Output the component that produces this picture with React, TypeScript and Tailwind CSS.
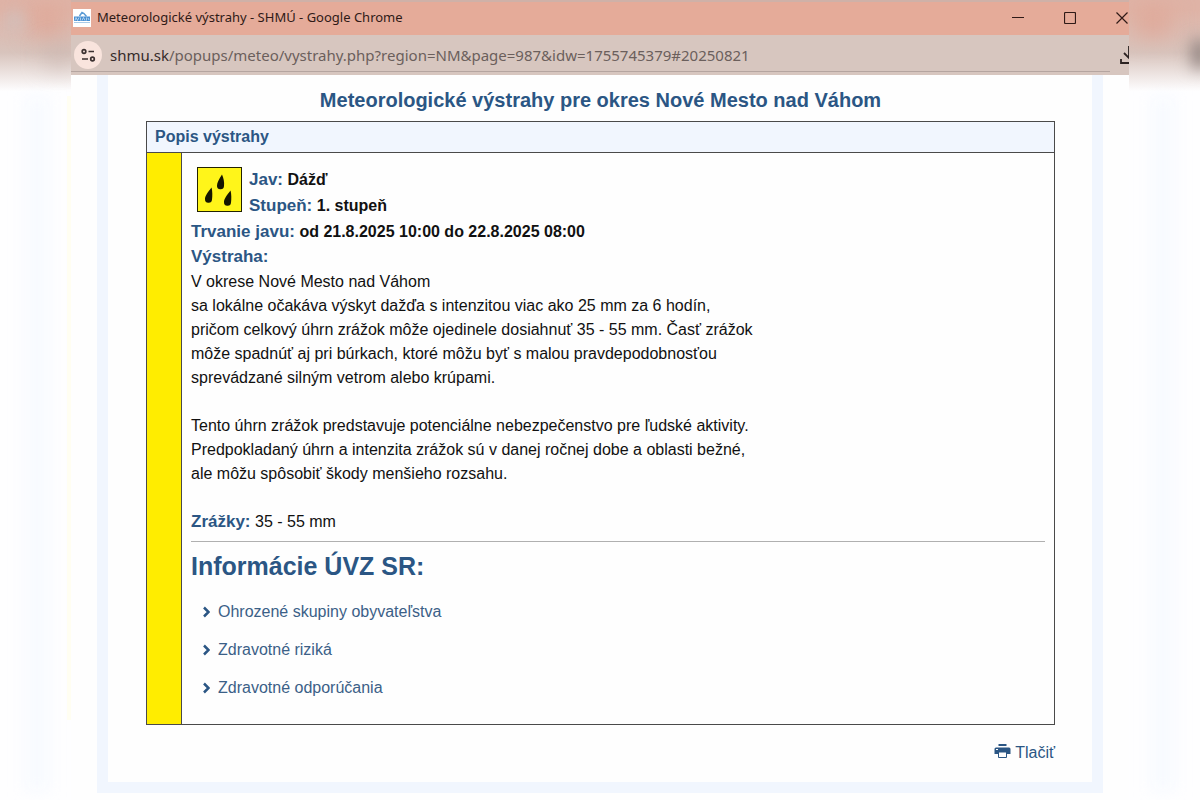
import { ReactNode } from "react";

const links = [
  { label: "Ohrozené skupiny obyvateľstva", href: "#skupiny" },
  { label: "Zdravotné riziká", href: "#rizika" },
  { label: "Zdravotné odporúčania", href: "#odporucania" },
];

const Label = ({ children }: { children: ReactNode }) => (
  <strong className="text-[17px] text-[#2b5684]">{children}</strong>
);

const ShmuIcon = () => (
  <svg width="18" height="18" viewBox="0 0 18 18" className="bg-white">
    <path d="M6.500 7 9 3.500l2 1L13.500 7.500" fill="none" stroke="#5b9bd5" strokeWidth="1.500" />
    <path d="M1 7.500h16v4.500H1z" fill="#4a90d2" />
    <path d="M2 11.500l1-3 1.500 3 1.500-3M7.500 8.500v3M9 11.500l1.500-3 1.500 3M13.500 8.500v3M15 9l1 2" fill="none" stroke="#c5def3" strokeWidth=".8" />
    <path d="M1 13.500h16" stroke="#a9cbe8" />
  </svg>
);

const SiteInfoIcon = () => (
  <svg width="16" height="16" viewBox="0 0 16 16" fill="none" stroke="#3b3030" strokeWidth="1.700">
    <circle cx="4" cy="4.500" r="1.800" />
    <path d="M8.500 4.500H14M2 12h6" />
    <circle cx="12.500" cy="12" r="1.800" />
  </svg>
);

const RainIcon = () => (
  <svg
    width="45"
    height="45"
    viewBox="0 0 45 45"
    className="shrink-0"
    role="img"
    aria-label="Dážď"
  >
    <rect x=".5" y=".5" width="44" height="44" fill="#fff51a" stroke="#222200" />
    <g fill="#151500">
      <path d="M25 7.500C22 12 20 16 20 18.500a3.500 3.500 0 0 0 7 .5C27.500 15 26.500 11 25 7.500Z" />
      <path d="M14.500 20.500C11 25 8 29 8 32a3.500 3.500 0 0 0 7 .5C15.500 29 15.500 24 14.500 20.500Z" />
      <path d="M33.500 23.500C30 28 27 32 27 35a3.500 3.500 0 0 0 7 .5C34.500 32 34.500 27 33.500 23.500Z" />
    </g>
  </svg>
);

const PrinterIcon = () => (
  <svg width="17" height="15" viewBox="0 0 17 15" className="-mt-1">
    <path d="M4.500 0h8v2h-8z" fill="#2b5684" />
    <path d="M2 3.500h13a1.500 1.500 0 0 1 1.500 1.500v5H13V8H4v2H.5V5A1.500 1.500 0 0 1 2 3.500Z" fill="#2b5684" />
    <path d="M4.500 8h8v5.500h-8z" fill="#fff" stroke="#2b5684" />
    <path d="M2 5.500h2" stroke="#fff" />
  </svg>
);

const TitleBar = () => (
  <div className="flex h-[35px] items-center border-t-2 border-[#cfb1a8] bg-[#e5ab99] pb-px pl-[2px] text-[#2f1a17]">
    <ShmuIcon />
    <span className="ml-[6px] flex-1 truncate text-[13px]">
      Meteorologické výstrahy - SHMÚ - Google Chrome
    </span>
    <div className="flex shrink-0 items-center gap-10">
      <button type="button" aria-label="Minimalizovať">
        <svg width="12" height="12" viewBox="0 0 12 12">
          <path d="M0 5.500h12" stroke="#2f1a17" />
        </svg>
      </button>
      <button type="button" aria-label="Maximalizovať">
        <svg width="12" height="12" viewBox="0 0 12 12">
          <rect x=".5" y=".5" width="11" height="11" rx="1" fill="none" stroke="#2f1a17" strokeWidth="1.200" />
        </svg>
      </button>
      <button type="button" aria-label="Zavrieť">
        <svg width="13" height="12" viewBox="0 0 13 12">
          <path d="M.5.5l11 11M11.500.5l-11 11" stroke="#2f1a17" strokeWidth="1.200" />
        </svg>
      </button>
    </div>
  </div>
);

const AddressBar = () => (
  <div className="bg-[#d7c6bf]">
    <div className="flex h-10 items-center pl-[3px]">
      <button
        type="button"
        aria-label="Informácie o stránke"
        className="flex size-7 items-center justify-center rounded-full bg-[#f9e4dd]"
      >
        <SiteInfoIcon />
      </button>
      <span className="ml-2 flex-1 truncate text-[15px] text-[#6b5f5c]">
        <span className="text-[#352b2a]">shmu.sk</span>
        /popups/meteo/vystrahy.php?region=NM&amp;page=987&amp;idw=1755745379#20250821
      </span>
      <button type="button" aria-label="Stiahnuť" className="w-[9px] shrink-0 overflow-hidden">
        <svg width="18" height="18" viewBox="0 0 18 18" fill="none" stroke="#2b2221" strokeWidth="1.800">
          <path d="M9 0v12M4 7l5 5 5-5M1 13v4h16v-4" />
        </svg>
      </button>
    </div>
    <div className="-mt-1 mr-[19px] h-px bg-[#b5a5a0]" />
    <div className="h-[3px]" />
  </div>
);

// soft strip of the window edge shown beside the window
const SideStrip = ({ right = false }: { right?: boolean }) => (
  <div aria-hidden="true" className={right ? "overflow-hidden" : "-scale-x-100 overflow-hidden"}>
    <div className="relative h-full bg-[#fefeff]">
      <div className="h-24 bg-linear-to-b from-[#dfb3a6] from-10% via-[#d8c4bd] via-55% to-[#fefeff] to-95%" />
      <div className="absolute top-[10px] left-2 h-6 w-8 bg-[#e0a594] blur-md" />
      {right ? (
        <div className="absolute top-10 -right-2 h-7 w-4 bg-[#8d807d] blur-sm" />
      ) : (
        <>
          <div className="absolute top-3 left-[50px] h-4 w-3 bg-[#ccc4c4] blur-sm" />
          <div className="absolute top-12 left-0 h-4 w-6 bg-[#c5b1ab] blur-md" />
          <div className="absolute top-24 bottom-[80px] left-0 w-1 bg-[#fffef2]" />
        </>
      )}
      <div className="absolute top-24 bottom-2 left-[22px] w-6 bg-[#f7faff] blur-sm" />
    </div>
  </div>
);

const Warning = () => (
  <section className="border border-[#4a4a4a]">
    <h2 className="border-b border-[#4a4a4a] bg-[#f1f6fe] pl-2 text-base leading-[30px] font-bold text-[#2b5684]">
      Popis výstrahy
    </h2>
    <div className="flex">
      <div className="w-[35px] shrink-0 border-r border-[#4a4a4a] bg-[#ffed00]" />
      <div className="min-w-0 flex-1 px-[9px] pt-[14px] pb-[10px]">
        <div className="flex gap-[7px] pl-[6px] font-bold">
          <RainIcon />
          <div className="leading-[26px]">
            <p>
              <Label>Jav:</Label> Dážď
            </p>
            <p>
              <Label>Stupeň:</Label> 1. stupeň
            </p>
          </div>
        </div>
        <p className="leading-[25px] font-bold">
          <Label>Trvanie javu:</Label> od 21.8.2025 10:00 do 22.8.2025 08:00
        </p>
        <p className="leading-[26px]">
          <Label>Výstraha:</Label>
        </p>
        <p>
          V okrese Nové Mesto nad Váhom
          <br />
          sa lokálne očakáva výskyt dažďa s intenzitou viac ako 25 mm za 6 hodín,
          <br />
          pričom celkový úhrn zrážok môže ojedinele dosiahnuť 35 - 55 mm. Časť zrážok
          <br />
          môže spadnúť aj pri búrkach, ktoré môžu byť s malou pravdepodobnosťou
          <br />
          sprevádzané silným vetrom alebo krúpami.
        </p>
        <p className="mt-6">
          Tento úhrn zrážok predstavuje potenciálne nebezpečenstvo pre ľudské aktivity.
          <br />
          Predpokladaný úhrn a intenzita zrážok sú v danej ročnej dobe a oblasti bežné,
          <br />
          ale môžu spôsobiť škody menšieho rozsahu.
        </p>
        <p className="mt-6">
          <Label>Zrážky:</Label> 35 - 55 mm
        </p>
        <hr className="mt-[7px] border-[#b0b0b0]" />
        <h3 className="mt-2 text-[25px] leading-8 font-bold text-[#2b5684]">
          Informácie ÚVZ SR:
        </h3>
        <ul className="mt-[18px] pl-3 text-[#3b6087]">
          {links.map((link) => (
            <li key={link.href} className="mb-[14px] flex">
              <a href={link.href} className="flex items-center gap-2">
                <svg width="7" height="12" viewBox="0 0 7 12" fill="none" stroke="#2b5684" strokeWidth="2.500">
                  <path d="M1 1.500 5.500 6 1 10.500" />
                </svg>
                {link.label}
              </a>
            </li>
          ))}
        </ul>
      </div>
    </div>
  </section>
);

export default function App() {
  return (
    <div className="grid min-h-screen grid-cols-[71px_minmax(0,1fr)_71px] overflow-hidden bg-white">
      <SideStrip />
      <div className="overflow-hidden bg-[#fefefe]">
        <header className="font-['Noto_Sans',sans-serif]">
          <TitleBar />
          <AddressBar />
        </header>
        <main className="mx-[26px] border-x-[11px] border-b-[11px] border-[#f1f6fe] pt-3 pr-[37px] pb-[17px] pl-[38px] font-['Liberation_Sans',Arial,sans-serif] text-base leading-6 text-[#111]">
          <h1 className="mb-[7px] text-center text-xl leading-[27px] font-bold text-[#2b5684]">
            Meteorologické výstrahy pre okres Nové Mesto nad Váhom
          </h1>
          <Warning />
          <div className="mt-4 flex justify-end">
            <a href="#tlacit" className="flex items-center gap-1 text-[#2b5684]">
              <PrinterIcon />
              Tlačiť
            </a>
          </div>
        </main>
      </div>
      <SideStrip right />
    </div>
  );
}
